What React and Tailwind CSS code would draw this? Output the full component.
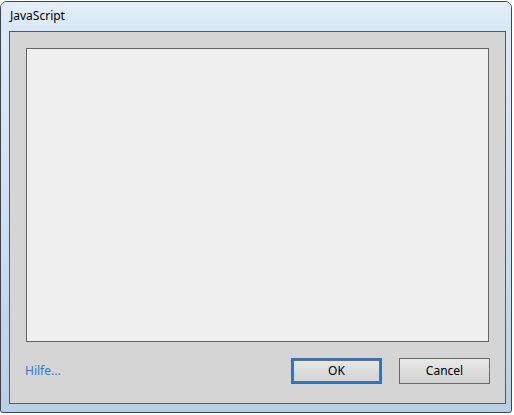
export default function App() {
  return (
    <div className="h-[415px] w-[514px] bg-white pt-[1px]" style={{ fontFamily: '"Noto Sans", "Liberation Sans", sans-serif' }}>
      <div className="flex h-[412px] w-[512px] flex-col rounded-t-[7px] rounded-b-[3px] border border-[#3c4450] bg-gradient-to-b from-[#dfeaf7] via-[#cfe0f2] to-[#b9cfe6]">
        {/* Titelleiste */}
        <div className="flex h-[29px] items-center rounded-t-[6px] bg-gradient-to-b from-[#e4eef9] to-[#d8e7f6] pb-[1px] pl-[9px]">
          <span className="text-[12px] text-black">JavaScript</span>
        </div>

        <div className="flex flex-1 pl-[8px] pr-[5px] pb-[8px]">
          <div className="flex flex-1 flex-col border border-[#555a60] bg-[#d5d5d5] pt-[16px] pr-[16px] pb-[19px] pl-[16px]">
            <div className="flex-1 border border-[#646464] bg-[#f0f0f0]" />
            <div className="mt-[16px] flex h-[26px] items-center">
              <span className="ml-[-1px] text-[12px] text-[#2f7ad0]">Hilfe...</span>
              <div className="ml-auto flex gap-[17px]">
                <button className="h-[26px] w-[91px] border-2 border-[#1d76d0] bg-gradient-to-b from-[#e8e8e8] to-[#d2d2d2] text-[12px] text-black outline outline-1 -outline-offset-3 outline-[#707070]">
                  OK
                </button>
                <button className="mr-[-1px] h-[26px] w-[91px] border border-[#6a6a6a] bg-gradient-to-b from-[#e8e8e8] to-[#d2d2d2] text-[12px] text-black">
                  Cancel
                </button>
              </div>
            </div>
          </div>
        </div>
      </div>
    </div>
  )
}
